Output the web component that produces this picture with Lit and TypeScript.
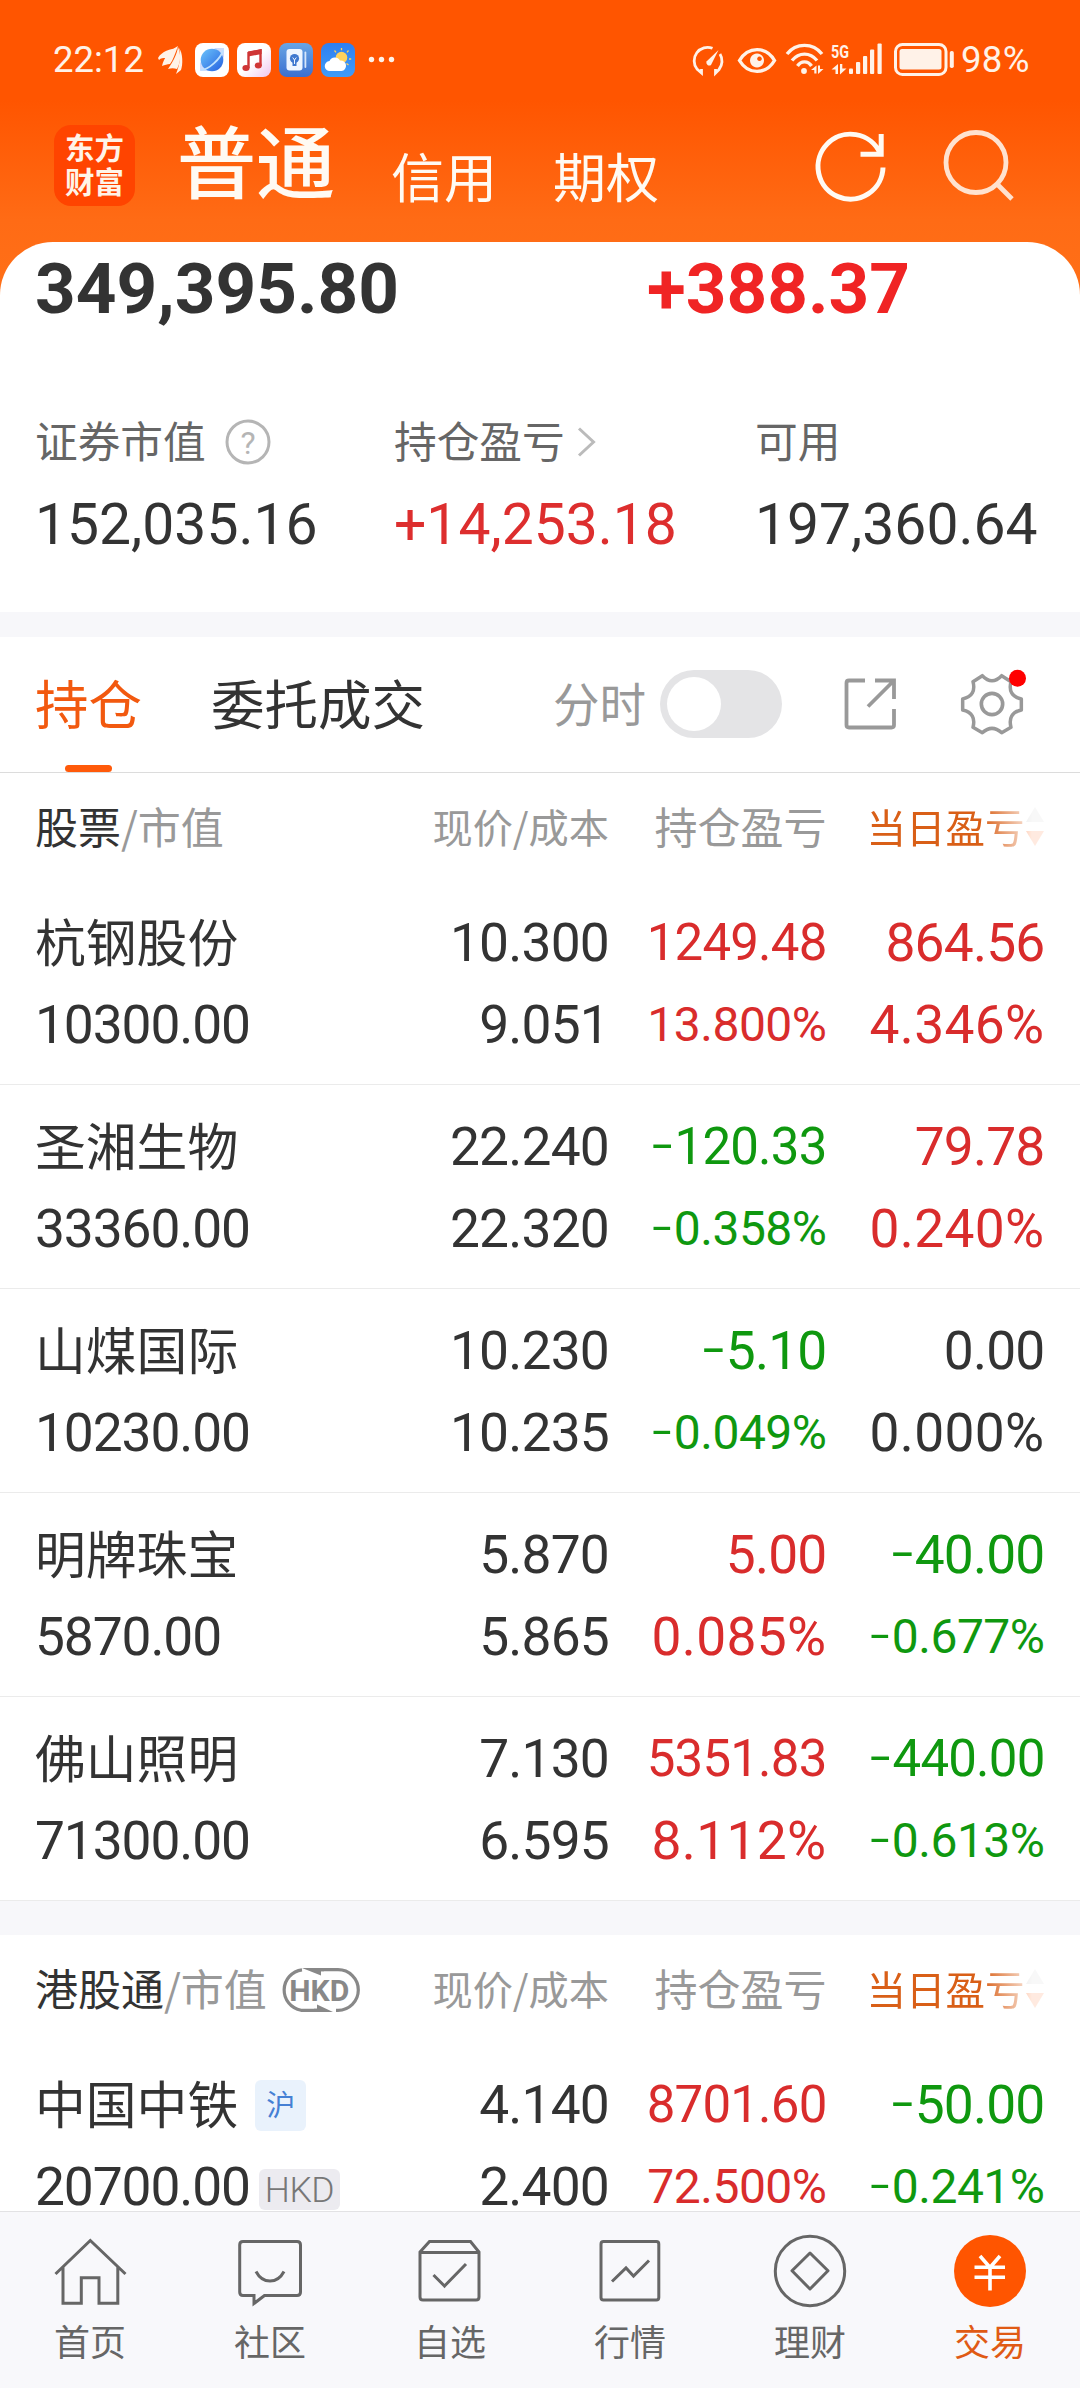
import { LitElement, html, svg, css, nothing } from "lit";
import { customElement, property } from "lit/decorators.js";
import { classMap } from "lit/directives/class-map.js";

type Tone = "up" | "down" | "flat";
interface Cell { text: string; tone: Tone; size: "l" | "m" | "s"; }
interface Holding {
  name: string;
  value: string;
  price: string;
  cost: string;
  cells: [Cell, Cell, Cell, Cell];
  market?: string;
  currency?: string;
}

const c = (text: string, tone: Tone, size: "l" | "m" | "s" = "l"): Cell => ({ text, tone, size });

const A_SHARES: Holding[] = [
  { name: "杭钢股份", value: "10300.00", price: "10.300", cost: "9.051",
    cells: [c("1249.48", "up", "m"), c("864.56", "up"), c("13.800%", "up", "s"), c("4.346%", "up")] },
  { name: "圣湘生物", value: "33360.00", price: "22.240", cost: "22.320",
    cells: [c("-120.33", "down", "m"), c("79.78", "up"), c("-0.358%", "down", "s"), c("0.240%", "up")] },
  { name: "山煤国际", value: "10230.00", price: "10.230", cost: "10.235",
    cells: [c("-5.10", "down"), c("0.00", "flat"), c("-0.049%", "down", "s"), c("0.000%", "flat")] },
  { name: "明牌珠宝", value: "5870.00", price: "5.870", cost: "5.865",
    cells: [c("5.00", "up"), c("-40.00", "down"), c("0.085%", "up"), c("-0.677%", "down", "s")] },
  { name: "佛山照明", value: "71300.00", price: "7.130", cost: "6.595",
    cells: [c("5351.83", "up", "m"), c("-440.00", "down", "m"), c("8.112%", "up"), c("-0.613%", "down", "s")] },
];

const HK_SHARES: Holding[] = [
  { name: "中国中铁", value: "20700.00", price: "4.140", cost: "2.400", market: "沪", currency: "HKD",
    cells: [c("8701.60", "up", "m"), c("-50.00", "down"), c("72.500%", "up", "s"), c("-0.241%", "down", "s")] },
];

@customElement("status-bar")
class StatusBar extends LitElement {
  static styles = css`
    :host { display: flex; height: 118px; box-sizing: border-box; padding: 1px 48px 0 53px; color: #fff2e8;
      font: 36.5px/1 Roboto, "Liberation Sans", sans-serif; align-items: center; justify-content: space-between; }
    .side { display: flex; align-items: center; }
    .time { width: 104px; letter-spacing: 0; line-height: 44px; }
    .pct { margin-left: 6px; width: 71px; letter-spacing: 0.3px; line-height: 44px; }
    svg { display: block; flex: none; }
    .g5 { font: 700 19px Roboto, sans-serif; fill: #fff2e8; }
  `;
  render() {
    return html`
      <div class="side">
        <span class="time">22:12</span>
        <svg width="240" height="36" viewBox="157 42 240 36">
          <g fill="#fff2e8">
            <path d="M158 58 C162 51 170 49 178 48 C172 51 169 55 166 58 C163 58 161 58 159 60 Z"/>
            <path d="M162 66 C164 57 170 50 178 46 C175 54 173 60 170 64 C167 64 165 65 162 66 Z"/>
            <path d="M168 69 C173 62 177 54 178 47 C181 54 181 62 177 69 C174 68 171 68 168 69 Z"/>
            <path d="M176 74 C180 64 181 55 179 48 C183 53 183 65 181 70 Z"/>
          </g>
          <defs>
            <linearGradient id="globe" x1="0" y1="0" x2="1" y2="1"><stop offset="0" stop-color="#6cc4fb"/><stop offset="1" stop-color="#2560e0"/></linearGradient>
            <linearGradient id="music" x1="0" y1="0" x2="1" y2="1"><stop offset=".5" stop-color="#fff"/><stop offset="1" stop-color="#efc6ee"/></linearGradient>
            <linearGradient id="card" x1="0" y1="0" x2="0" y2="1"><stop offset="0" stop-color="#68a5e4"/><stop offset="1" stop-color="#3a6fd0"/></linearGradient>
            <linearGradient id="sky" x1="0" y1="0" x2="0" y2="1"><stop offset="0" stop-color="#2f7ff0"/><stop offset="1" stop-color="#3f9cf8"/></linearGradient>
          </defs>
          <rect x="195" y="43" width="34" height="34" rx="8" fill="#fff"/>
          <path d="M214 48 L224 48 V58 Z" fill="#cfdcfb"/><path d="M200 62 V71 H210 Z" fill="#cfdcfb"/>
          <circle cx="212" cy="60" r="11.3" fill="url(#globe)"/>
          <path d="M201 70 C208 70 221 59 223 50" fill="none" stroke="#bfe2ff" stroke-width="1.8"/>
          <rect x="237" y="43" width="34" height="34" rx="8" fill="url(#music)"/>
          <path d="M248.5 68 V53 L260.5 50.500 V66" fill="none" stroke="#cf3535" stroke-width="2.400"/>
          <path d="M248 51.500 L261.600 49 V54 L248 56.500 Z" fill="#cf3535"/>
          <ellipse cx="246" cy="68" rx="3.600" ry="3" fill="#cf3535"/><ellipse cx="258.300" cy="65.500" rx="3.500" ry="3" fill="#cf3535"/>
          <rect x="279" y="43" width="34" height="34" rx="8" fill="url(#card)"/>
          <rect x="286.500" y="49" width="16" height="21.500" rx="3" fill="#eff6ff"/>
          <rect x="304.500" y="51.500" width="1.800" height="16.500" rx=".9" fill="#d6e6fb"/>
          <circle cx="294.500" cy="58.500" r="4.600" fill="#3f78cf"/><path d="M292.500 62 H296.500 V66 H292.500 Z" fill="#3f78cf"/>
          <path d="M292.700 57.500 L294.500 60 L296.300 57.500 M294.500 60 V64" stroke="#eff6ff" stroke-width="1" fill="none"/>
          <rect x="321" y="43" width="34" height="34" rx="8" fill="url(#sky)"/>
          <circle cx="341.500" cy="57.500" r="5.800" fill="#ffd25c"/>
          <path d="M341.500 48 V50.300 M334.500 50.500 L336 52.300 M348.500 50.500 L347 52.300 M349 59 H351.200 M346.500 63.500 L348.500 65" stroke="#ffd25c" stroke-width="1.300"/>
          <path d="M330 71 a5 5 0 0 1 -.5 -10 a5.800 5.800 0 0 1 10.500 -.5 a5.300 5.300 0 0 1 1.500 10.500 Z" fill="#fff"/>
          <g fill="#fff2e8"><circle cx="371.500" cy="59.500" r="2.700"/><circle cx="381.500" cy="59.500" r="2.700"/><circle cx="391.500" cy="59.500" r="2.700"/></g>
        </svg>
      </div>
      <div class="side">
        <svg width="263" height="36" viewBox="692 42 263 36">
          <g fill="none" stroke="#fff2e8" stroke-width="2.800">
            <path d="M712.500 48.300 A13.400 13.400 0 0 0 697 69 L701.500 73 V69"/>
            <path d="M720 54 A13.400 13.400 0 0 1 719 69.500 L715.500 73 V69"/>
            <path d="M739.500 60.500 C748 46 766 46 774.500 60.500 C766 75 748 75 739.500 60.500 Z" stroke-width="3.400"/>
            <path d="M787 54 C796 42.500 813 42.500 822 54" stroke-width="3.400"/>
            <path d="M792 60.500 C799 52 810 52 817 60.500" stroke-width="3.400"/>
            <path d="M797.500 66 C801 60.500 808 60.500 811.500 66" stroke-width="3.400"/>
            <rect x="895.500" y="44.500" width="50.500" height="30" rx="7" stroke-width="3"/>
          </g>
          <g fill="#fff2e8">
            <path d="M718.500 50 L711 65 A3 3 0 0 1 706.500 61.500 Z"/>
            <path fill-rule="evenodd" d="M757 53.500 a7 7 0 1 0 .01 0 Z M759.500 56.500 a2.300 2.300 0 1 1 -.01 0 Z"/>
            <circle cx="804" cy="71" r="2.900"/>
            <path d="M811 70 L816.500 65.500 V73.500 H814.300 V70 Z M818 65.500 H820 V69 H823.500 L818 74 Z"/>
            <path d="M831.500 69.500 L838 64 V74 H835.500 V69.500 Z M840 64 H842.300 V68.500 H846.500 L840 74.500 Z"/>
            <rect x="849" y="68.500" width="4" height="5.500" rx="1"/><rect x="856" y="62" width="4.200" height="12" rx="1"/>
            <rect x="863" y="56" width="4.200" height="18" rx="1"/><rect x="870" y="49.500" width="4.200" height="24.500" rx="1"/>
            <rect x="877.500" y="43.500" width="4.200" height="30.500" rx="1"/>
            <rect x="899.500" y="49" width="42" height="20.500" rx="2.500"/>
            <rect x="949.800" y="51" width="4" height="17" rx="1.800"/>
          </g>
          <text class="g5" x="831" y="57.500" textLength="18" lengthAdjust="spacingAndGlyphs">5G</text>
        </svg>
        <span class="pct">98%</span>
      </div>`;
  }
}

@customElement("app-header")
class AppHeader extends LitElement {
  static styles = css`
    :host { display: flex; height: 124px; box-sizing: border-box; padding: 0 62px 0 54px; color: #fffaf3;
      font-family: "Noto Sans CJK SC", sans-serif; align-items: flex-start; }
    .logo { width: 81px; height: 81px; margin-top: 7px; box-sizing: border-box; border-radius: 17px; background: #ff4400;
      font-size: 29.500px; font-weight: 700; line-height: 34px; text-align: center; padding-top: 4px; color: #fff4e8; }
    .tab { font-size: 53px; line-height: 80px; margin-top: 17px; white-space: nowrap; }
    .tab.active { font-size: 79px; line-height: 114px; margin: -16px 56px -20px 42px; font-weight: 500; }
    .second { margin-right: 56px; }
    .icons { margin-left: auto; display: flex; margin-top: 8px; }
    svg { display: block; fill: none; }
  `;
  render() {
    return html`
      <div class="logo">东方<br>财富</div>
      <span class="tab active">普通</span>
      <span class="tab second">信用</span>
      <span class="tab">期权</span>
      <div class="icons">
        <svg width="206" height="80" viewBox="812 126 206 80">
          <path d="M883 167.500 A32.500 32.500 0 1 1 880 153 M881.200 134 V154.300 H860.500" stroke="#fffaf3" stroke-width="5"/>
          <circle cx="976" cy="162.500" r="30" stroke="#ffe2cf" stroke-width="4.800"/>
          <path d="M996.500 183.500 L1012 199" stroke="#ffe2cf" stroke-width="4.800"/>
        </svg>
      </div>`;
  }
}

@customElement("account-summary")
class AccountSummary extends LitElement {
  static styles = css`
    :host { display: block; height: 370px; box-sizing: border-box; border-radius: 53px 53px 0 0; background: #fff;
      overflow: hidden; font-family: Roboto, "Liberation Sans", sans-serif; color: #333; }
    .totals { display: flex; padding: 6px 0 0 35px; font-size: 71px; line-height: 82px; font-weight: 700; }
    .total { width: 612px; }
    .today { color: #f02424; }
    .cols { display: grid; grid-template-columns: 359px 361px 1fr; padding: 79px 0 0 35px; }
    .label { display: flex; align-items: center; font: 42.700px/64px "Noto Sans CJK SC", sans-serif; color: #666; height: 64px; }
    .label span { margin-top: -4px; }
    .label svg { margin: 2px 0 0 19px; }
    .label .chev { margin-left: 11px; }
    .num { font-size: 57px; line-height: 68px; margin-top: 18px; white-space: nowrap; }
    .up { color: #dd2e2e; }
    .q { font: 32px Roboto, sans-serif; fill: #b5b5b5; }
  `;
  render() {
    return html`
      <div class="totals"><span class="total">349,395.80</span><span class="today">+388.37</span></div>
      <div class="cols">
        <div>
          <div class="label"><span>证券市值</span>
            <svg width="46" height="46" viewBox="0 0 46 46"><circle cx="23" cy="23" r="21" fill="none" stroke="#b5b5b5" stroke-width="3"/><text class="q" x="23" y="34.500" text-anchor="middle">?</text></svg>
          </div>
          <div class="num">152,035.16</div>
        </div>
        <div>
          <div class="label"><span>持仓盈亏</span>
            <svg class="chev" width="22" height="32" viewBox="0 0 22 32"><path d="M3 2.500 L17.500 16 L3 29.500" fill="none" stroke="#bbb" stroke-width="3"/></svg>
          </div>
          <div class="num up">+14,253.18</div>
        </div>
        <div>
          <div class="label"><span>可用</span></div>
          <div class="num">197,360.64</div>
        </div>
      </div>`;
  }
}

@customElement("holdings-toolbar")
class HoldingsToolbar extends LitElement {
  static styles = css`
    :host { display: flex; height: 136px; box-sizing: border-box; border-bottom: 1px solid #dcdcdc; padding: 0 54px 0 35px;
      background: #fff; font-family: "Noto Sans CJK SC", sans-serif; color: #333; }
    .tab { display: flex; flex-direction: column; align-items: center; font-size: 53.500px; line-height: 80px; padding-top: 25px; white-space: nowrap; }
    .tab.active { color: #f2590f; margin-right: 69px; }
    .tab.active::after { content: ""; width: 47px; height: 7px; border-radius: 4px; background: #ff5a0a; margin-top: 23px; }
    .right { margin-left: auto; display: flex; align-items: center; height: 134px; }
    .label { font-size: 46.500px; line-height: 70px; color: #999; margin: -4px 14px 0 0; }
    .switch { width: 122px; height: 68px; box-sizing: border-box; border-radius: 34px; background: #e4e4e6; padding: 7px; }
    .knob { width: 54px; height: 54px; border-radius: 50%; background: #fff; }
    svg { display: block; fill: none; stroke: #999; }
  `;
  render() {
    return html`
      <div class="tab active">持仓</div>
      <div class="tab">委托成交</div>
      <div class="right">
        <span class="label">分时</span>
        <div class="switch"><div class="knob"></div></div>
        <svg width="244" height="80" viewBox="782 664 244 80">
          <path stroke-width="3.800" d="M865 680.500 H849 Q846.500 680.500 846.500 683 V725 Q846.500 727.500 849 727.500 H891.500 Q894 727.500 894 725 V709 M875 680.500 H894 V699 M893 681.500 L868 706.500"/>
          <g transform="translate(820 650) scale(.33333)">
            <path stroke-width="10.500" stroke-linejoin="round" d="M487 77 Q516 107 545 77 L573 95 C566 122 575 141 604 147 V180 C575 186 566 205 573 232 L545 248 Q516 222 487 248 L459 232 C466 205 457 186 428 180 V147 C457 141 466 122 459 95 Z"/>
            <circle cx="516" cy="162" r="32" stroke-width="11"/>
            <circle cx="592.500" cy="85" r="25.500" fill="#ff0000" stroke="none"/>
          </g>
        </svg>
      </div>`;
  }
}

@customElement("holdings-table")
class HoldingsTable extends LitElement {
  @property() heading = "";
  @property({ type: Boolean }) hkd = false;
  @property({ attribute: false }) rows: Holding[] = [];

  static styles = css`
    :host { display: block; background: #fff; color: #333; font-family: Roboto, "Liberation Sans", sans-serif; }
    .head, .row { display: grid; grid-template-columns: 1fr 200px 217.500px 218px; padding: 0 35.500px 0 35px; white-space: nowrap; }
    .head { height: 108px; align-items: center; font-family: "Noto Sans CJK SC", sans-serif; font-size: 43px; line-height: 64px; color: #999; padding-bottom: 4px; box-sizing: border-box; }
    .head > * { text-align: right; }
    .head .title { display: flex; align-items: center; }
    .head b { font-weight: 400; color: #333; }
    .head .narrow { font-size: 40.200px; padding-top: 2px; }
    .head .sort { display: flex; justify-content: flex-end; align-items: center; font-size: 39.500px; color: #d95f17; padding-top: 2px;
      -webkit-mask-image: linear-gradient(90deg, #000 155px, rgba(0,0,0,.12) 205px); mask-image: linear-gradient(90deg, #000 155px, rgba(0,0,0,.12) 205px); }
    .pill { margin: 6px 0 0 11px; }
    .pill text { font: 700 30px Roboto, sans-serif; fill: #888; }
    .row { height: 204px; box-sizing: border-box; padding-top: 21px; grid-auto-rows: 82px; border-bottom: 1px solid #ebebeb; font-size: 53.300px; line-height: 82px; letter-spacing: -0.8px; }
    .row > * { text-align: right; height: 82px; }
    .row > .left { display: flex; align-items: center; text-align: left; letter-spacing: -1.1px; }
    .row > .left .name { font-family: "Noto Sans CJK SC", sans-serif; font-size: 50.800px; letter-spacing: 0; margin-top: -6px; }
    .m { font-size: 51px; letter-spacing: -0.8px; }
    .l.pct { letter-spacing: 0.35px; }
    .s { font-size: 48px; letter-spacing: -0.5px; }
    .up { color: #d92c2c; }
    .down { color: #0f980f; }
    .dash { display: inline-block; transform: translateY(-2px) scale(1.450, .9); margin: 0 6px 0 4px; }
    .market { width: 51px; height: 51px; border-radius: 6px; background: #e9f2fc; color: #4580d4; font: 29px/46px "Noto Sans CJK SC", sans-serif; letter-spacing: 0; text-align: center; margin-left: 17px; }
    .cur { width: 81px; height: 41px; border-radius: 6px; background: #ecebf0; color: #777; font: 300 35.500px/42px Roboto, sans-serif; letter-spacing: -0.5px; text-align: center; margin: 4px 0 0 9px; }
    svg { display: block; flex: none; }
  `;

  private num(cell: Cell) {
    const neg = cell.text.startsWith("-");
    return html`<div class=${classMap({ [cell.tone]: true, [cell.size]: true, pct: cell.text.endsWith("%") })}>${neg ? html`<span class="dash">-</span>${cell.text.slice(1)}` : cell.text}</div>`;
  }

  render() {
    return html`
      <div class="head">
        <div class="title"><b>${this.heading}</b>/市值${this.hkd ? html`
          <svg class="pill" width="82" height="46" viewBox="278 1968 82 46">
            <g fill="none" stroke="#888" stroke-width="3.200">
              <path d="M302 1970.800 A20.500 20.500 0 0 0 301 2011.300 H322"/>
              <path d="M316 1970.700 H338 A20.300 20.300 0 0 1 338 2011.300 H336"/>
            </g>
            <path d="M302 1969.100 H324 V1972.300 H321 V1976.500 Z M333 2012.900 H314 V2009.700 H317 V2005.500 Z" fill="#888"/>
            <text x="319.300" y="2001.700" text-anchor="middle" textLength="60" lengthAdjust="spacingAndGlyphs">HKD</text>
          </svg>` : nothing}</div>
        <div class="narrow">现价/成本</div>
        <div>持仓盈亏</div>
        <div class="sort">当日盈亏<svg width="20" height="42" viewBox="0 0 20 42"><path d="M10 2 L19 17 H1 Z" fill="#c4c4c4"/><path d="M10 41 L19 26 H1 Z" fill="#ff5500"/></svg></div>
      </div>
      ${this.rows.map((r) => html`
        <div class="row">
          <div class="left"><span class="name">${r.name}</span>${r.market ? html`<span class="market">${r.market}</span>` : nothing}</div>
          <div>${r.price}</div>${this.num(r.cells[0])}${this.num(r.cells[1])}
          <div class="left"><span>${r.value}</span>${r.currency ? html`<span class="cur">${r.currency}</span>` : nothing}</div>
          <div>${r.cost}</div>${this.num(r.cells[2])}${this.num(r.cells[3])}
        </div>`)}`;
  }
}

const NAV = [
  { label: "首页", icon: svg`<path d="M55.500 2274 L90.300 2240.500 L125.500 2274 M63 2267 V2303.300 H81.300 V2277.700 H99 V2303.300 H117.800 V2267"/>` },
  { label: "社区", icon: svg`<path d="M243 2241.500 H297 Q300.500 2241.500 300.500 2245 V2292 Q300.500 2295.500 297 2295.500 H264.500 L254 2303.500 V2295.500 H243 Q239.700 2295.500 239.700 2292 V2245 Q239.700 2241.500 243 2241.500 Z M256 2271.500 Q261 2281 270 2281 Q279 2281 284 2271.500"/>` },
  { label: "自选", icon: svg`<path d="M420 2252 L429.500 2241.500 H470.500 L479 2252 V2297 Q479 2300 476 2300 H423 Q420 2300 420 2297 Z M420 2252.500 H479 M433.500 2275 L444.500 2286 L466 2264"/>` },
  { label: "行情", icon: svg`<rect x="601" y="2241.500" width="57.800" height="58.500" rx="2.500"/><path d="M612 2281.500 L626 2268 L633.500 2276 L649 2260.500"/>` },
  { label: "理财", icon: svg`<circle cx="810" cy="2271" r="34.700"/><path stroke-linejoin="round" d="M810 2253 L828 2270.800 L810 2289 L792 2270.800 Z"/>` },
  { label: "交易", icon: svg`<circle cx="990" cy="2271" r="36" fill="#ff5500" stroke="none"/><path class="coin" d="M980 2256 L990 2267.500 L1000 2256 M974.500 2267.200 H1005 M974.500 2277.200 H1005 M990 2267 V2290.500"/>` },
];

@customElement("bottom-nav")
class BottomNav extends LitElement {
  static styles = css`
    :host { display: grid; grid-template-columns: repeat(6, 1fr); height: 177px; box-sizing: border-box; border-top: 1px solid #e2e2e4;
      background: #f8f8fb; font: 36px/54px "Noto Sans CJK SC", sans-serif; color: #666; }
    .item { display: flex; flex-direction: column; align-items: center; padding-top: 19px; }
    .item.active { color: #e05a14; }
    .label { margin-top: 2px; }
    svg { display: block; fill: none; stroke: #666; stroke-width: 3; }
    .coin { stroke: #fff; stroke-width: 3.600; }
  `;
  render() {
    return html`${NAV.map((n, i) => html`
      <div class=${classMap({ item: true, active: i === 5 })}>
        <svg width="80" height="80" viewBox=${`${50 + i * 180} 2231 80 80`}>${n.icon}</svg>
        <span class="label">${n.label}</span>
      </div>`)}`;
  }
}

@customElement("app-root")
class AppRoot extends LitElement {
  static styles = css`
    :host { display: flex; flex-direction: column; width: 1080px; height: 2388px; overflow: hidden; background: #fff; }
    .top { background: linear-gradient(#ff5500 0, #ff5500 100px, #ff6b15 220px, #ff7018 300px, #fff 301px); flex: none; }
    .band { height: 25px; background: #f7f7fa; flex: none; }
    .band.wide { height: 34px; }
    .scroll { flex: 1; min-height: 0; overflow: hidden; }
    bottom-nav { flex: none; }
  `;
  render() {
    return html`
      <div class="top">
        <status-bar></status-bar>
        <app-header></app-header>
        <account-summary></account-summary>
      </div>
      <div class="scroll">
        <div class="band"></div>
        <holdings-toolbar></holdings-toolbar>
        <holdings-table heading="股票" .rows=${A_SHARES}></holdings-table>
        <div class="band wide"></div>
        <holdings-table heading="港股通" hkd .rows=${HK_SHARES}></holdings-table>
      </div>
      <bottom-nav></bottom-nav>`;
  }
}
